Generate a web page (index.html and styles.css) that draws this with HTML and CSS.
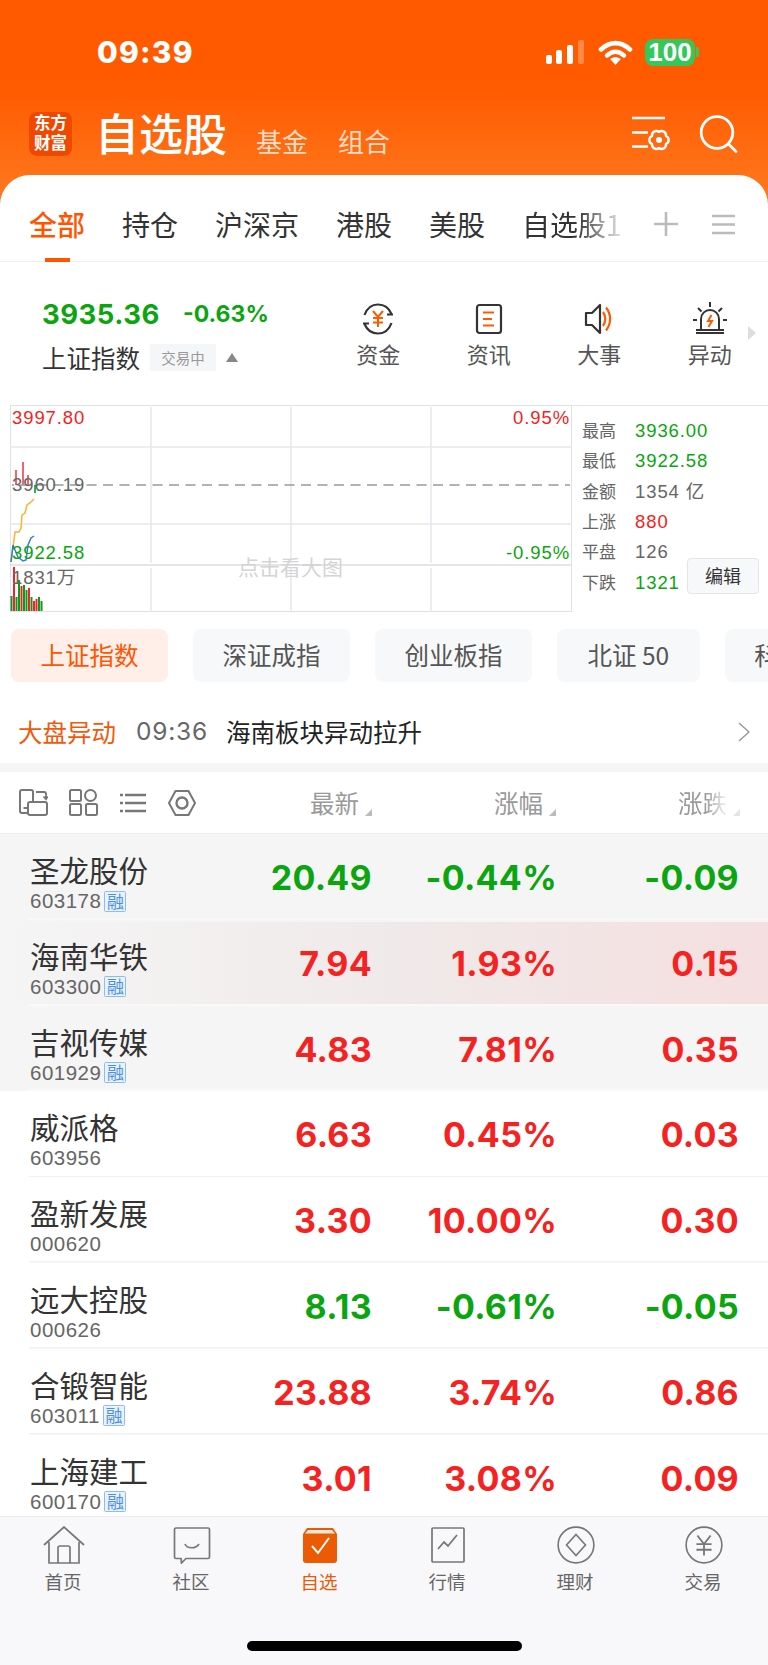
FILE: index.html
```html
<!DOCTYPE html>
<html lang="zh-CN">
<head>
<meta charset="utf-8">
<title>自选股</title>
<link rel="stylesheet" href="styles.css">
</head>
<body>
<div class="app">
  <header class="header">
    <div class="status">
      <span class="time">09:39</span>
      <svg class="signal" width="38" height="24" viewBox="0 0 38 24"><rect x="0" y="15" width="6" height="9" rx="2" fill="#fff"/><rect x="10" y="10" width="6" height="14" rx="2" fill="#fff"/><rect x="21" y="5" width="6" height="19" rx="2" fill="#fff"/><rect x="32" y="0" width="6" height="24" rx="2" fill="#ff8a45"/></svg>
      <svg class="wifi" width="35" height="25" viewBox="0 0 35 25"><path d="M3 9.500C12 1 23 1 32 9.500" fill="none" stroke="#fff" stroke-width="4.600" stroke-linecap="round"/><path d="M9 15.500c5.500-4.800 11.500-4.800 17 0" fill="none" stroke="#fff" stroke-width="4.400" stroke-linecap="round"/><path d="M17.500 25l-5.300-6c3.200-2.400 7.400-2.400 10.600 0z" fill="#fff"/></svg>
      <span class="battery">100</span><span class="nub"></span>
    </div>
    <div class="titlebar">
      <div class="logo"><span>东方</span><span>财富</span></div>
      <h1 class="title">自选股</h1>
      <span class="sub sub-a">基金</span>
      <span class="sub">组合</span>
      <svg class="gear" width="40" height="38" viewBox="0 0 40 38" fill="none" stroke="#fff" stroke-width="2.400"><path d="M0 2h33M0 16.500h16M0 30.500h16"/><path d="M33.930 20A4.300 4.300 0 0 1 33.930 28 4.300 4.300 0 0 1 27 32 4.300 4.300 0 0 1 20.070 28 4.300 4.300 0 0 1 20.070 20 4.300 4.300 0 0 1 27 16 4.300 4.300 0 0 1 33.930 20z" stroke-linejoin="round"/><circle cx="27" cy="24" r="3" fill="#fff" stroke="none"/></svg>
      <svg class="search" width="40" height="42" viewBox="0 0 40 42" fill="none" stroke="#fff" stroke-width="2.800"><circle cx="19" cy="19.500" r="15.800"/><path d="M30.500 31l7.500 7.500" stroke-linecap="round"/></svg>
    </div>
  </header>

  <main class="card">
    <nav class="tabs">
      <span class="tab active">全部</span>
      <span class="tab t2">持仓</span>
      <span class="tab t3">沪深京</span>
      <span class="tab t4">港股</span>
      <span class="tab t5">美股</span>
      <span class="tab t6 fade">自选股1</span>
      <svg class="plus" width="24" height="24" viewBox="0 0 24 24" stroke="#bbb" stroke-width="2.600"><path d="M12 0v24M0 12h24"/></svg>
      <svg class="menu" width="23" height="21" viewBox="0 0 23 21" stroke="#bbb" stroke-width="2.600"><path d="M0 2h23M0 10.500h23M0 19h23"/></svg>
    </nav>

    <section class="index">
      <div class="index-left">
        <div class="quote"><span class="qv">3935.36</span><span class="qp">-0.63%</span></div>
        <div class="qname"><span>上证指数</span><span class="tag">交易中</span><span class="tri"></span></div>
      </div>
      <div class="shortcuts">
        <div class="sc">
          <svg width="36" height="36" viewBox="0 0 36 36" fill="none"><path d="M4.500 14C7 7 12 3.500 18 3.500c6 0 11 3.500 13.500 9.500M31.500 22C29 29 24 32.500 18 32.500 12 32.500 7 29 4.500 23" stroke="#333" stroke-width="2.200"/><path d="M27 13.500h6M3 22.500h6" stroke="#333" stroke-width="2.200"/><path d="M13 10l5 6 5-6M18 16v10M13 17h10M13 21.500h10" stroke="#ff5a00" stroke-width="2"/></svg>
          <span>资金</span>
        </div>
        <div class="sc">
          <svg width="36" height="36" viewBox="0 0 36 36" fill="none"><rect x="6" y="4" width="24" height="28" rx="2.500" stroke="#333" stroke-width="2.200"/><path d="M12 11.500h11M12 18h9M12 24.500h11" stroke="#ff5a00" stroke-width="2.200"/></svg>
          <span>资讯</span>
        </div>
        <div class="sc">
          <svg width="36" height="36" viewBox="0 0 36 36" fill="none"><path d="M5 12h6l8-8v28l-8-8H5z" stroke="#333" stroke-width="2.200" stroke-linejoin="round"/><path d="M22 11c3 4 3 10 0 14M25 6.500c5.500 7 5.500 16 0 23" stroke="#ff5a00" stroke-width="2.200"/></svg>
          <span>大事</span>
        </div>
        <div class="sc">
          <svg width="36" height="36" viewBox="0 0 36 36" fill="none"><path d="M9 28V18a9 9 0 0 1 18 0v10M4 32h28M4 29h28" stroke="#333" stroke-width="2"/><path d="M18 1v5M6 7l3.500 3.500M30 7l-3.500 3.500M1 19h4M31 19h4" stroke="#333" stroke-width="2"/><path d="M19.500 14l-3.500 6h4l-3.500 6" stroke="#ff5a00" stroke-width="2"/></svg>
          <span>异动</span>
        </div>
      </div>
      <span class="more"></span>
    </section>

    <section class="market">
      <div class="chart">
        <svg class="plot" width="562" height="207" viewBox="0 0 562 207" fill="none">
          <g stroke="#e6e8f0" stroke-width="1.500">
            <path d="M0 42h562M0 119h562"/>
            <path d="M141 2v156M141 163v43M281 2v156M281 163v43M421 2v156M421 163v43"/>
          </g>
          <path d="M0 160h562" stroke="#dcdee6" stroke-width="1.500"/>
          <g stroke="#f5222d" stroke-width="1.400"><path d="M6 65v15M13 57v23M18 70v10"/></g>
          <path d="M25 80v8" stroke="#2fb344" stroke-width="2"/>
          <path d="M1 157L2 150 5 127 9 127 11 123 12 110 15 108 17 100 21 97 24 94" stroke="#ffb02e" stroke-width="1.500"/>
          <path d="M1 157L3 140 5 145 8 152 13 156 16 155 18 140 21 133 24 131" stroke="#2f7fd6" stroke-width="1.500"/>
          <g stroke-width="2">
            <path d="M1.500 206v-15M6.500 206v-14" stroke="#0b9a1e"/>
            <path d="M4 206v-44" stroke="#f5222d"/>
            <path d="M9 206v-31M14 206v-26M16.500 206v-21M21.500 206v-14" stroke="#0b9a1e"/>
            <path d="M11.500 206v-25M19 206v-23M24 206v-10M26.500 206v-12" stroke="#f5222d"/>
            <path d="M29 206v-14M31.500 206v-10" stroke="#0b9a1e"/>
          </g>
          <path d="M2 80h558" stroke="#999" stroke-width="1.300" stroke-dasharray="10 6.500" stroke-dashoffset="8"/>
        </svg>
        <span class="cl hi">3997.80</span>
        <span class="cl mid">3960.19</span>
        <span class="cl lo">3922.58</span>
        <span class="cl vol">1831万</span>
        <span class="cl rhi">0.95%</span>
        <span class="cl rlo">-0.95%</span>
        <span class="cl hint">点击看大图</span>
      </div>
      <div class="stats">
        <dl class="stat-list">
          <div class="stat"><dt>最高</dt><dd class="green">3936.00</dd></div>
          <div class="stat"><dt>最低</dt><dd class="green">3922.58</dd></div>
          <div class="stat"><dt>金额</dt><dd>1354 亿</dd></div>
          <div class="stat"><dt>上涨</dt><dd class="red">880</dd></div>
          <div class="stat"><dt>平盘</dt><dd>126</dd></div>
          <div class="stat"><dt>下跌</dt><dd class="green">1321</dd></div>
        </dl>
        <button class="edit">编辑</button>
      </div>
    </section>

    <div class="chips">
      <span class="chip on">上证指数</span>
      <span class="chip">深证成指</span>
      <span class="chip">创业板指</span>
      <span class="chip wide">北证 50</span>
      <span class="chip">科创50</span>
    </div>

    <div class="alert">
      <span class="a-label">大盘异动</span>
      <span class="a-time">09:36</span>
      <span class="a-text">海南板块异动拉升</span>
      <svg class="chev" width="12" height="20" viewBox="0 0 12 20" fill="none" stroke="#999" stroke-width="1.500"><path d="M1 1l10 9-10 9"/></svg>
    </div>

    <div class="toolbar">
      <svg class="tb t-a" width="29" height="27" viewBox="0 0 29 27" fill="none" stroke="#777" stroke-width="2"><path d="M14 12V3a2 2 0 0 0-2-2H3a2 2 0 0 0-2 2v19a2 2 0 0 0 2 2h5"/><rect x="9" y="13" width="19" height="13" rx="2"/><path d="M4.500 19h5M17 3h8a2 2 0 0 1 2 2v5M24.500 7.500l2.500 2.800 1.800-2.800" stroke-width="1.800"/></svg>
      <svg class="tb t-b" width="29" height="27" viewBox="0 0 29 27" fill="none" stroke="#777" stroke-width="2"><rect x="1" y="1" width="11" height="11" rx="1.500"/><circle cx="21.500" cy="6.500" r="5.500"/><rect x="1" y="15" width="11" height="11" rx="1.500"/><rect x="17" y="15" width="11" height="11" rx="1.500"/></svg>
      <svg class="tb t-c" width="26" height="22" viewBox="0 0 26 22" fill="none" stroke="#777" stroke-width="2.400"><path d="M5 3h21M5 11h21M5 19h21M0 3h3M0 11h3M0 19h3"/></svg>
      <svg class="tb" width="28" height="26" viewBox="0 0 28 26" fill="none" stroke="#777" stroke-width="2"><path d="M7.500 1h13L27 13l-6.500 12h-13L1 13z" stroke-linejoin="round"/><circle cx="14" cy="13" r="5.500" stroke-width="2.400"/></svg>
      <span class="th th1">最新</span><i class="sort"></i>
      <span class="th th2">涨幅</span><i class="sort"></i>
      <span class="th th3 fade">涨跌</span><i class="sort pale"></i>
    </div>

    <div class="rows">
      <div class="row hl"><div class="nm">圣龙股份<div class="code">603178<b class="rong">融</b></div></div><span class="n green">20.49</span><span class="n green">-0.44%</span><span class="n green">-0.09</span></div>
      <div class="row hl hot"><div class="nm">海南华铁<div class="code">603300<b class="rong">融</b></div></div><span class="n red">7.94</span><span class="n red">1.93%</span><span class="n red">0.15</span></div>
      <div class="row hl"><div class="nm">吉视传媒<div class="code">601929<b class="rong">融</b></div></div><span class="n red">4.83</span><span class="n red">7.81%</span><span class="n red">0.35</span></div>
      <div class="row"><div class="nm">威派格<div class="code">603956</div></div><span class="n red">6.63</span><span class="n red">0.45%</span><span class="n red">0.03</span></div>
      <div class="row"><div class="nm">盈新发展<div class="code">000620</div></div><span class="n red">3.30</span><span class="n red">10.00%</span><span class="n red">0.30</span></div>
      <div class="row"><div class="nm">远大控股<div class="code">000626</div></div><span class="n green">8.13</span><span class="n green">-0.61%</span><span class="n green">-0.05</span></div>
      <div class="row"><div class="nm">合锻智能<div class="code">603011<b class="rong">融</b></div></div><span class="n red">23.88</span><span class="n red">3.74%</span><span class="n red">0.86</span></div>
      <div class="row last"><div class="nm">上海建工<div class="code">600170<b class="rong">融</b></div></div><span class="n red">3.01</span><span class="n red">3.08%</span><span class="n red">0.09</span></div>
    </div>
  </main>

  <footer class="tabbar">
    <div class="nav-items">
      <div class="nav">
        <svg width="42" height="38" viewBox="0 0 42 38" fill="none" stroke="#777" stroke-width="1.700"><path d="M1 19L21 1l20 18"/><path d="M6 16v21h30V16"/><path d="M15 37V22a2 2 0 0 1 2-2h8a2 2 0 0 1 2 2v15"/></svg>
        <span>首页</span>
      </div>
      <div class="nav">
        <svg width="38" height="38" viewBox="0 0 38 38" fill="none" stroke="#777" stroke-width="1.700"><path d="M3 2h32a1.500 1.500 0 0 1 1.500 1.500V31a1.500 1.500 0 0 1-1.500 1.500H13L8.500 37 8 32.500H3A1.500 1.500 0 0 1 1.500 31V3.500A1.500 1.500 0 0 1 3 2z"/><path d="M12 18c2 5 11 5 14 0"/></svg>
        <span>社区</span>
      </div>
      <div class="nav on">
        <svg width="36" height="38" viewBox="0 0 36 38"><path d="M5 2h26l4 6v26a3 3 0 0 1-3 3H4a3 3 0 0 1-3-3V8z" fill="#eb5a05"/><path d="M3 7.500l3-3.500h24l3 3.500z" fill="#fff" opacity=".85"/><path d="M10 20l6 7 11-15" fill="none" stroke="#fff" stroke-width="2"/></svg>
        <span>自选</span>
      </div>
      <div class="nav">
        <svg width="36" height="38" viewBox="0 0 36 38" fill="none" stroke="#777" stroke-width="1.700"><rect x="2" y="2" width="32" height="34" rx="1"/><path d="M8 23l6-7 4 4 9-11" stroke-width="1.800"/></svg>
        <span>行情</span>
      </div>
      <div class="nav">
        <svg width="40" height="40" viewBox="0 0 40 40" fill="none" stroke="#777" stroke-width="1.700"><circle cx="20" cy="20" r="18.800"/><path d="M20 9l10 11-10 11-10-11z"/></svg>
        <span>理财</span>
      </div>
      <div class="nav">
        <svg width="40" height="40" viewBox="0 0 40 40" fill="none" stroke="#777" stroke-width="1.700"><circle cx="20" cy="20" r="18.800"/><path d="M13 10l7 9 7-9M20 19v12M12 19h16M12 25h16" stroke-width="1.900"/></svg>
        <span>交易</span>
      </div>
    </div>
    <div class="home-bar"></div>
  </footer>
</div>
</body>
</html>
```

FILE: styles.css
```css
* { box-sizing: border-box; margin: 0; padding: 0; }
html, body { width: 768px; height: 1665px; overflow: hidden; background: #fff; }
body { font-family: "Noto Sans CJK SC", "Liberation Sans", sans-serif; color: #333; }
.app { width: 768px; height: 1665px; display: flex; flex-direction: column; overflow: hidden; }

/* header */
.header { height: 205px; margin-bottom: -30px; flex: none; background: linear-gradient(180deg, #ff5a00 0, #ff5a00 85px, #ff7a20 205px); color: #fff; }
.status { height: 104px; display: flex; align-items: center; padding-left: 97px; }
.time { font: 800 30px/1 Inter, "Liberation Sans", sans-serif; letter-spacing: 1.200px; width: 449px; }
.signal { margin-right: 14px; }
.wifi { margin-right: 12px; }
.battery { width: 50px; height: 27px; border-radius: 8px; background: #34c759; font: 700 26px/27px "Liberation Sans", sans-serif; text-align: center; color: #fff; }
.nub { width: 3px; height: 10px; margin-left: 1px; border-radius: 0 2px 2px 0; background: #34c759; }
.titlebar { height: 52px; margin-top: 4px; display: flex; align-items: center; padding-left: 29px; }
.logo { width: 43px; height: 44px; border-radius: 8px; background: #f04800; display: flex; flex-direction: column; align-items: center; justify-content: center; font: 700 16.500px/20px "Liberation Serif", "Noto Sans CJK SC", serif; color: #fff; }
.title { font-size: 44px; font-weight: 500; line-height: 52px; margin-left: 23px; margin-top: -5px; color: #fff; }
.sub { font-size: 26px; line-height: 30px; color: #ffdcc6; align-self: flex-end; margin-left: 30px; margin-bottom: 4px; }
.sub-a { margin-left: 29px; }
.gear { margin-left: auto; margin-top: 2px; }
.search { margin-left: 26px; margin-right: 30px; }

/* card */
.card { flex: 1; min-height: 0; position: relative; background: #fff; border-radius: 30px 30px 0 0; overflow: hidden; }
.tabs { height: 87px; display: flex; align-items: center; border-bottom: 1.500px solid #eee; padding: 21px 0 9px 29px; font-size: 28px; color: #333; position: relative; }
.tab { line-height: 40px; white-space: nowrap; }
.t2 { margin-left: 37px; }
.t3 { margin-left: 37px; }
.t4 { margin-left: 37px; }
.t5 { margin-left: 37px; }
.t6 { margin-left: 37px; }
.fade { -webkit-mask-image: linear-gradient(90deg, #000 55%, rgba(0,0,0,.2) 95%); mask-image: linear-gradient(90deg, #000 55%, rgba(0,0,0,.2) 95%); }
.active { color: #ff5500; font-weight: 500; position: relative; }
.active::after { content: ""; position: absolute; left: 16px; top: 54px; width: 25px; height: 4px; background: #ff5500; }
.plus { margin-left: 32px; }
.menu { margin-left: 34px; }

/* index */
.index { height: 143px; position: relative; display: flex; padding: 35px 0 0 42px; }
.index-left { width: 281px; }
.quote { display: flex; align-items: center; height: 34px; color: #0aa50f; font-family: Inter, "Liberation Sans", sans-serif; font-weight: 700; }
.qv { font-size: 27.500px; letter-spacing: .5px; width: 141px; }
.qp { font-size: 23px; }
.qname { display: flex; align-items: center; margin-top: 10px; height: 32px; font-size: 24.500px; color: #333; }
.tag { margin-left: 10px; width: 66px; height: 27px; background: #f5f6f8; color: #999; font-size: 14.500px; line-height: 27px; text-align: center; }
.tri { margin-left: 10px; border: 6.500px solid transparent; border-top: 0; border-bottom: 9px solid #888; }
.shortcuts { display: flex; margin-top: 4px; height: 72px; }
.sc { width: 110.500px; display: flex; flex-direction: column; align-items: center; font-size: 22px; color: #555; }
.sc span { line-height: 30px; margin-top: 1px; }
.more { position: absolute; left: 748px; top: 64px; border: 7px solid transparent; border-right: 0; border-left: 8px solid #ddd; }

/* market */
.market { display: flex; height: 207px; }
.chart { margin-left: 10px; position: relative; border: 1.500px solid #dfe1e8; flex: none; width: 562px; }
.plot { position: absolute; left: -1.500px; top: -1.500px; }
.cl { position: absolute; font: 400 18.500px/20px "Liberation Sans", "Noto Sans CJK SC", sans-serif; letter-spacing: .9px; white-space: nowrap; }
.hi { left: 1px; top: 2px; color: #f52222; }
.mid { left: 1px; top: 69px; color: #666; }
.lo { left: 1px; top: 137px; color: #0aa50f; }
.vol { left: 1px; top: 162px; color: #666; }
.rhi { right: 1px; top: 2px; color: #f52222; }
.rlo { right: 1px; top: 137px; color: #0aa50f; }
.hint { left: 227px; top: 152px; font-size: 21px; letter-spacing: 0; color: #d4d4d4; }
.stats { flex: 1; display: flex; border-top: 1.500px solid #e4e6ec; padding-left: 10px; }
.stat-list { width: 105px; padding-top: 10px; white-space: nowrap; }
.stat { display: flex; height: 30.300px; align-items: center; font-size: 17px; color: #666; }
.stat dt { width: 53px; flex: none; margin-top: -3px; }
.stat dd { font: 400 18.500px/20px "Liberation Sans", "Noto Sans CJK SC", sans-serif; letter-spacing: .9px; }
.green { color: #0aa50f; }
.red { color: #f52222; }
.edit { align-self: flex-end; width: 72px; height: 36px; margin-bottom: 18px; padding-bottom: 3px; background: #f7f8fa; border: 1px solid #e3e5ea; border-radius: 4px; font: 400 18px/28px "Noto Sans CJK SC", sans-serif; color: #333; }

/* chips */
.chips { display: flex; gap: 25px; margin-top: 17px; padding-left: 11px; height: 53px; width: 900px; }
.chip { height: 53px; padding: 0 29.500px; border-radius: 8px; background: #f7f8fa; color: #555; font-size: 24.500px; line-height: 52px; white-space: nowrap; }
.chip.on { background: #ffefe8; color: #ff5500; }
.chip.wide { padding: 0 30.500px; }

/* alert */
.alert { height: 81px; display: flex; align-items: center; padding: 18px 18px 0 18px; font-size: 24.500px; }
.a-label { color: #f05a0a; width: 118px; }
.a-time { width: 90px; color: #666; font: 400 24.500px/1 Inter, "Liberation Sans", sans-serif; letter-spacing: .8px; }
.a-text { color: #222; }
.chev { margin-left: auto; }

/* toolbar */
.toolbar { border-top: 9px solid #f5f6f8; border-bottom: 1.500px solid #eee; height: 71px; display: flex; align-items: center; position: relative; padding-left: 19px; font-size: 24.500px; color: #999; }
.tb { margin-right: 22px; flex: none; }
.t-a { margin-right: 21px; }
.th { position: absolute; top: 15px; line-height: 32px; }
.th1 { left: 310px; }
.th2 { left: 494px; }
.th3 { left: 678px; }
.sort { position: absolute; top: 37px; left: 365px; border-style: solid; border-width: 0 0 7px 7px; border-color: transparent transparent #bbb transparent; }
.th2 + .sort { left: 549px; }
.th3 + .sort { left: 733px; }
.sort.pale { border-bottom-color: #e4e4e4; }

/* rows */
.rows { display: flex; flex-direction: column; }
.row { height: 85.800px; flex: none; display: grid; grid-template-columns: 212px 130px 185px 182px; padding: 0 29px 0 30px; align-items: start; background: linear-gradient(#f0f0f0, #f0f0f0) right bottom / calc(100% - 29px) 1.500px no-repeat, #fff; }
.row.hl { background: linear-gradient(#f9f9f9, #f9f9f9) right bottom / calc(100% - 29px) 2px no-repeat, #f5f5f5; }
.row.hot { background: linear-gradient(#f5f5f5, #f5f5f5) top / 100% 2px no-repeat, linear-gradient(#f9f9f9, #f9f9f9) right bottom / calc(100% - 29px) 2px no-repeat, linear-gradient(90deg, #f5f5f5 0, #f0e9e9 52%, #f5dfe0 100%); }
.row.last { background: #fff; }
.nm { font-size: 29.500px; line-height: 38px; padding-top: 16px; color: #333; white-space: nowrap; }
.code { display: flex; align-items: center; margin-top: -1px; height: 28px; font: 400 20.500px/28px "Liberation Sans", sans-serif; letter-spacing: .5px; color: #666; }
.rong { margin-left: 3px; width: 22px; height: 21px; border: 1px solid #8fbcef; background: #eaf3fd; color: #4a90e2; font: 400 17px/18px "Noto Sans CJK SC", sans-serif; letter-spacing: 0; text-align: center; border-radius: 1.500px; }
.n { padding-top: 25px; text-align: right; font: 700 34px/38px Inter, "Liberation Sans", sans-serif; letter-spacing: .3px; }

/* tab bar */
.tabbar { position: relative; height: 149px; flex: none; background: #f8f8fa; border-top: 1px solid #ececee; }
.nav-items { display: grid; grid-template-columns: repeat(6, 1fr); padding-top: 9px; }
.nav { display: flex; flex-direction: column; align-items: center; height: 70px; font-size: 18.500px; color: #666; }
.nav svg { height: 38px; flex: none; }
.nav span { line-height: 26px; margin: 4px 2px 0 0; }
.nav.on { color: #eb5a05; }
.home-bar { width: 275px; height: 10px; margin: 45px auto 0; border-radius: 5px; background: #000; }
```
